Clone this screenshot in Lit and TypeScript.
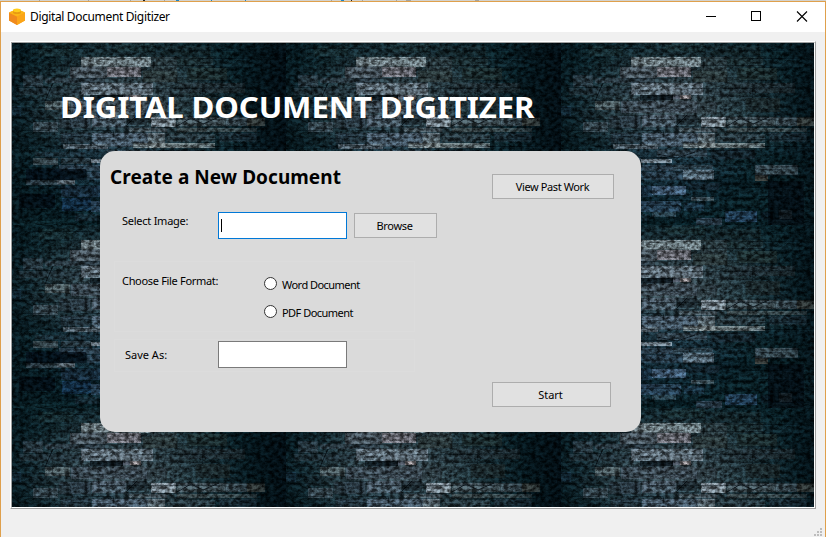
import { LitElement, html, css, svg } from "lit";
import { customElement } from "lit/decorators.js";

type Brick = [number, number, number, number, string];

// One wall tile is 275 x 183: x, y, width, height, colour of each stone.
const BRICKS: Brick[] = [
  [104, 2, 40, 7, "#1c3236"], [150, 4, 50, 9, "#14262a"], [28, 4, 34, 10, "#14282c"],
  [70, 15, 70, 10, "#78848a"], [140, 15, 26, 14, "#2c3a3e"], [166, 15, 36, 10, "#1c2c30"],
  [59, 25, 37, 11, "#4c5860"], [96, 25, 34, 10, "#74727a"], [132, 29, 34, 11, "#2c383a"],
  [12, 33, 20, 12, "#2a3a42"], [34, 36, 60, 5, "#2c3a42"], [176, 26, 40, 12, "#1c2a2c"],
  [70, 41, 72, 12, "#667480"], [8, 46, 60, 7, "#22323a"], [168, 41, 66, 10, "#223036"],
  [79, 53, 33, 5, "#060e14"], [112, 53, 7, 4, "#4c5460"], [119, 53, 11, 4, "#b4aaac"],
  [34, 59, 25, 9, "#4e5a5e"], [60, 59, 76, 12, "#3c4852"], [185, 56, 34, 14, "#1c282a"],
  [0, 64, 10, 10, "#18303e"], [20, 68, 16, 10, "#14242a"], [136, 60, 20, 12, "#2c383e"],
  [81, 73, 34, 12, "#4a5864"], [48, 74, 32, 12, "#28363e"], [116, 73, 20, 10, "#1a242a"],
  [140, 75, 25, 10, "#808a92"], [166, 75, 70, 9, "#46525a"], [236, 75, 18, 9, "#54534a"],
  [22, 80, 25, 10, "#40505a"], [118, 86, 38, 4, "#4a565e"], [166, 86, 80, 4, "#3e4a4c"],
  [81, 91, 56, 14, "#4c5c6c"], [137, 91, 17, 15, "#647078"], [50, 91, 30, 10, "#263640"],
  [156, 92, 48, 8, "#2c3c44"], [208, 91, 38, 9, "#1c2c34"],
  [122, 101, 82, 5, "#6c7678"], [52, 102, 45, 5, "#5a6670"],
  [24, 110, 50, 5, "#1c2e38"], [96, 108, 50, 7, "#33434f"], [150, 108, 44, 9, "#16262e"],
  [22, 116, 25, 7, "#3c484e"], [50, 116, 30, 6, "#2a3a42"], [80, 117, 31, 4, "#74808a"],
  [48, 123, 74, 6, "#2e404e"], [112, 123, 40, 5, "#30424e"], [194, 123, 43, 10, "#3e4e56"],
  [122, 128, 31, 10, "#627280"], [76, 130, 46, 8, "#2a3e4e"], [194, 133, 13, 6, "#3a3834"],
  [15, 127, 60, 11, "#040e16"], [15, 138, 49, 5, "#364650"], [46, 138, 18, 4, "#5c6870"],
  [50, 144, 41, 11, "#1a2e40"], [91, 144, 34, 9, "#48627c"], [128, 141, 30, 7, "#14242e"],
  [130, 155, 23, 4, "#44545c"], [51, 156, 29, 13, "#14304a"], [80, 159, 40, 11, "#2a4258"],
  [123, 161, 20, 8, "#1a3244"], [91, 170, 24, 5, "#385262"], [64, 172, 24, 7, "#182c36"],
  [164, 169, 32, 11, "#24405a"], [135, 176, 26, 7, "#2e3e4c"], [200, 170, 10, 8, "#0a1820"],
  [207, 139, 36, 44, "#020b12"], [218, 168, 13, 9, "#162026"], [8, 152, 36, 14, "#030c14"],
];

function mortar() {
  const lines = [];
  let seed = 17;
  const rnd = () => ((seed = (seed * 16807) % 2147483647) / 2147483647);
  for (let y = 3; y < 183; y += 10) {
    let x = 0;
    while (x < 275) {
      const w = 18 + rnd() * 50;
      const yy = y + Math.round(rnd() * 5);
      lines.push(svg`<path d="M${x} ${yy + 0.5}h${w}v${6 + rnd() * 5}" fill="none" stroke="#000a10" stroke-width="1" stroke-opacity="${0.3 + rnd() * 0.6}"/>`);
      lines.push(svg`<rect x="${x}" y="${yy + 1}" width="${w}" height="8" fill="${rnd() > 0.5 ? "#2c4c58" : "#000"}" fill-opacity="${rnd() * 0.22}"/>`);
      x += w;
    }
  }
  return lines;
}

@customElement("brick-wall")
export class BrickWall extends LitElement {
  static styles = css`
    :host { display: block; overflow: hidden; background: #04141b; }
    svg { display: block; width: 100%; height: 100%; }
  `;
  render() {
    return html`<svg aria-hidden="true">
      <defs>
        <filter id="stone" filterUnits="userSpaceOnUse" x="0" y="0" width="275" height="183" color-interpolation-filters="sRGB">
          <feTurbulence type="fractalNoise" baseFrequency="0.22 0.27" numOctaves="4" seed="11" result="n"/>
          <feColorMatrix in="n" type="matrix" values="2.2 0 0 0 -.6  2.2 0 0 0 -.6  2.2 0 0 0 -.6  0 0 0 0 1" result="g"/>
          <feComposite in="SourceGraphic" in2="g" operator="arithmetic" k1="1.05" k2="0.45" k3="0.03" k4="-0.012"/>
        </filter>
        <radialGradient id="glow" gradientUnits="userSpaceOnUse" cx="0" cy="0" r="1" gradientTransform="translate(114 62) scale(135 84)">
          <stop offset="0" stop-color="#3c4c54"/><stop offset=".5" stop-color="#273a41" stop-opacity=".85"/><stop offset="1" stop-color="#10242c" stop-opacity="0"/>
        </radialGradient>
        <radialGradient id="low" gradientUnits="userSpaceOnUse" cx="0" cy="0" r="1" gradientTransform="translate(104 130) scale(90 60)">
          <stop offset="0" stop-color="#203848" stop-opacity=".7"/><stop offset="1" stop-color="#0a2432" stop-opacity="0"/>
        </radialGradient>
        <linearGradient id="edge" x1="0" x2="1" y1="0" y2="0">
          <stop offset="0" stop-color="#010a10" stop-opacity=".25"/><stop offset=".1" stop-color="#010a10" stop-opacity="0"/>
          <stop offset=".8" stop-color="#010a10" stop-opacity="0"/><stop offset="1" stop-color="#010a10" stop-opacity=".85"/>
        </linearGradient>
        <pattern id="wall" patternUnits="userSpaceOnUse" x="-1" y="-1" width="275" height="183">
          <g filter="url(#stone)">
            <rect width="275" height="183" fill="#071c22"/>
            <rect width="275" height="183" fill="url(#glow)"/>
            <rect width="275" height="183" fill="url(#low)"/>
            ${BRICKS.map(([x, y, w, h, c]) => svg`<rect x="${x}" y="${y}" width="${w}" height="${h}" fill="${c}" fill-opacity=".8"/>`)}
            <g opacity=".5">${mortar()}</g>
            <path d="M34 59l8-18M116 83l10-10M166 84l14-8 12 6 16-7M194 133h30M96 112l20 4 18-6" fill="none" stroke="#02090e" stroke-opacity=".8"/>
            <rect width="275" height="183" fill="url(#edge)"/>
          </g>
        </pattern>
      </defs>
      <rect width="100%" height="100%" fill="url(#wall)"/>
    </svg>`;
  }
}

@customElement("app-root")
export class AppRoot extends LitElement {
  static styles = css`
    :host { display: block; width: 826px; height: 537px; overflow: hidden; font: 11px/14px "Noto Sans", sans-serif; color: #000; }
    * { box-sizing: border-box; }
    .screen { display: flex; flex-direction: column; height: 537px; }
    .behind { height: 1px; flex: none; display: block; width: 826px; }
    .window { flex: 1; display: flex; flex-direction: column; background: #f0f0f0; border: solid #dfa04c; border-width: 1px 1px 0 1px; }
    .titlebar { height: 30px; flex: none; display: flex; align-items: center; background: #fff; }
    .logo { width: 16px; height: 17px; margin: -2px 0 0 8px; }
    .caption { flex: 1; margin-left: 5px; font: 12px/16px "Noto Sans", sans-serif; letter-spacing: -0.35px; white-space: nowrap; }
    .controls { width: 137px; height: 30px; flex: none; }
    .raised { margin: 9px 9px 0 9px; height: 468px; flex: none; border: 1px solid; border-color: #fff #a0a0a0 #a0a0a0 #fff; }
    .sunken { height: 466px; display: grid; border: 1px solid; border-color: #a0a0a0 #fff #fff #a0a0a0; }
    .sunken > * { grid-area: 1 / 1; min-width: 0; min-height: 0; }
    .content { position: relative; display: flex; flex-direction: column; align-items: flex-start; }
    h1 { margin: 42px 0 0 48px; font-size: 29px; line-height: 44px; height: 45px; letter-spacing: -0.1px; color: #fff; white-space: nowrap; transform: scaleX(1.074); transform-origin: 0 0; }
    h2 { margin: 0; font-size: 19px; line-height: 26px; letter-spacing: 0.05px; white-space: nowrap; }
    .panel { margin: 21px 0 0 88px; width: 541px; height: 281px; border-radius: 15px; background: #dadada; display: flex; flex-direction: column; white-space: nowrap; }
    .head { display: flex; justify-content: space-between; align-items: flex-start; height: 61px; padding: 13px 27px 0 10px; }
    .head .btn { margin-top: 10px; }
    .btn { height: 25px; border: 1px solid #adadad; background: #e1e1e1; text-align: center; line-height: 24px; }
    .past { width: 122px; padding-right: 1px; letter-spacing: -0.4px; }
    .browse { width: 83px; margin: 1px 0 0 7px; padding-right: 2px; letter-spacing: -0.3px; }
    .start { width: 119px; margin: 10px 30px 0 auto; padding-right: 2px; }
    .row { display: flex; align-items: flex-start; }
    .pick { height: 49px; padding-left: 22px; }
    .pick .lbl { width: 96px; padding-top: 2px; letter-spacing: -0.25px; }
    .field { width: 129px; height: 27px; border: 1px solid #7a7a7a; background: #fff; }
    .focus { border-color: #0078d7; padding: 6px 0 0 2px; }
    .caret { width: 1px; height: 13px; background: #000; }
    .group { width: 301px; margin-left: 14px; border: 1px solid #dcdcdc; }
    .formats { height: 71px; padding: 12px 0 0 7px; }
    .formats .lbl { width: 142px; letter-spacing: -0.32px; }
    .options { display: flex; flex-direction: column; gap: 14px; padding-top: 4px; letter-spacing: -0.53px; }
    .option { display: flex; height: 14px; gap: 5px; align-items: center; }
    .radio { width: 13px; height: 13px; margin-top: -3px; border: 1px solid #333; border-radius: 50%; background: #fff; }
    .save { height: 33px; margin-top: 7px; padding: 1px 0 0 10px; }
    .save .lbl { width: 93px; padding-top: 7px; }
    .grip { width: 9px; height: 9px; margin: 19px 2px 0 auto; flex: none; }
  `;
  render() {
    return html`<div class="screen">
      <svg class="behind" viewBox="0 0 826 1" shape-rendering="crispEdges">
        <rect width="826" height="1" fill="#d2d2ce"/>
        <path d="M39 0h1v1h-1zM88 0h1v1h-1zM130 0h1v1h-1zM164 0h1v1h-1zM331 0h1v1h-1zM362 0h1v1h-1zM396 0h1v1h-1zM406 0h5v1h-5zM475 0h4v1h-4z" fill="#a4a4a0"/>
        <path d="M143 0h2v1h-2zM351 0h1v1h-1z" fill="#222"/>
        <path d="M176 0h3v1h-3zM211 0h1v1h-1zM245 0h1v1h-1zM341 0h3v1h-3z" fill="#1c84c4"/>
      </svg>
      <div class="window">
        <div class="titlebar">
          <svg class="logo" viewBox="0 0 16 17">
            <path d="M8 1L16 4.5V12.5L8 17L0 12.5V4.5Z" fill="#f9a01b"/>
            <path d="M0 4.8L8 8.5V17L0 12.5Z" fill="#f08a1d"/>
            <path d="M16 4.8L8 8.5V17L16 12.5Z" fill="#fba518"/>
            <path d="M0 4.5L8 1L16 4.5L8 8.5Z" fill="#fbb616"/>
            <path d="M4 2.6V4.5C4 6.6 12 6.6 12 4.5V2.6Z" fill="#e99a12"/>
            <ellipse cx="8" cy="2.3" rx="4" ry="1.9" fill="#ffcd1c"/>
          </svg>
          <div class="caption">Digital Document Digitizer</div>
          <svg class="controls" viewBox="0 0 137 30">
            <path d="M18 14.5h10M63.5 9.5h9v9h-9z" fill="none" stroke="#000" shape-rendering="crispEdges"/>
            <path d="M109 9.5l10 10M119 9.5l-10 10" stroke="#000" stroke-width="1.1"/>
          </svg>
        </div>
        <div class="raised"><div class="sunken">
          <brick-wall></brick-wall>
          <div class="content">
            <h1>DIGITAL DOCUMENT DIGITIZER</h1>
            <div class="panel">
              <div class="head"><h2>Create a New Document</h2><div class="btn past">View Past Work</div></div>
              <div class="row pick">
                <div class="lbl"><span>Select Image:</span></div>
                <div class="field focus"><div class="caret"></div></div>
                <div class="btn browse">Browse</div>
              </div>
              <div class="row group formats">
                <div class="lbl"><span>Choose File Format:</span></div>
                <div class="options">
                  <div class="option"><i class="radio"></i><span>Word Document</span></div>
                  <div class="option"><i class="radio"></i><span>PDF Document</span></div>
                </div>
              </div>
              <div class="row group save">
                <div class="lbl"><span>Save As:</span></div>
                <div class="field"></div>
              </div>
              <div class="btn start">Start</div>
            </div>
          </div>
        </div></div>
        <svg class="grip" viewBox="0 0 9 9" shape-rendering="crispEdges">
          <path d="M6 0h2v2H6zM3 3h2v2H3zM6 3h2v2H6zM0 6h2v2H0zM3 6h2v2H3zM6 6h2v2H6z" fill="#bdbdbd"/>
        </svg>
      </div>
    </div>`;
  }
}
